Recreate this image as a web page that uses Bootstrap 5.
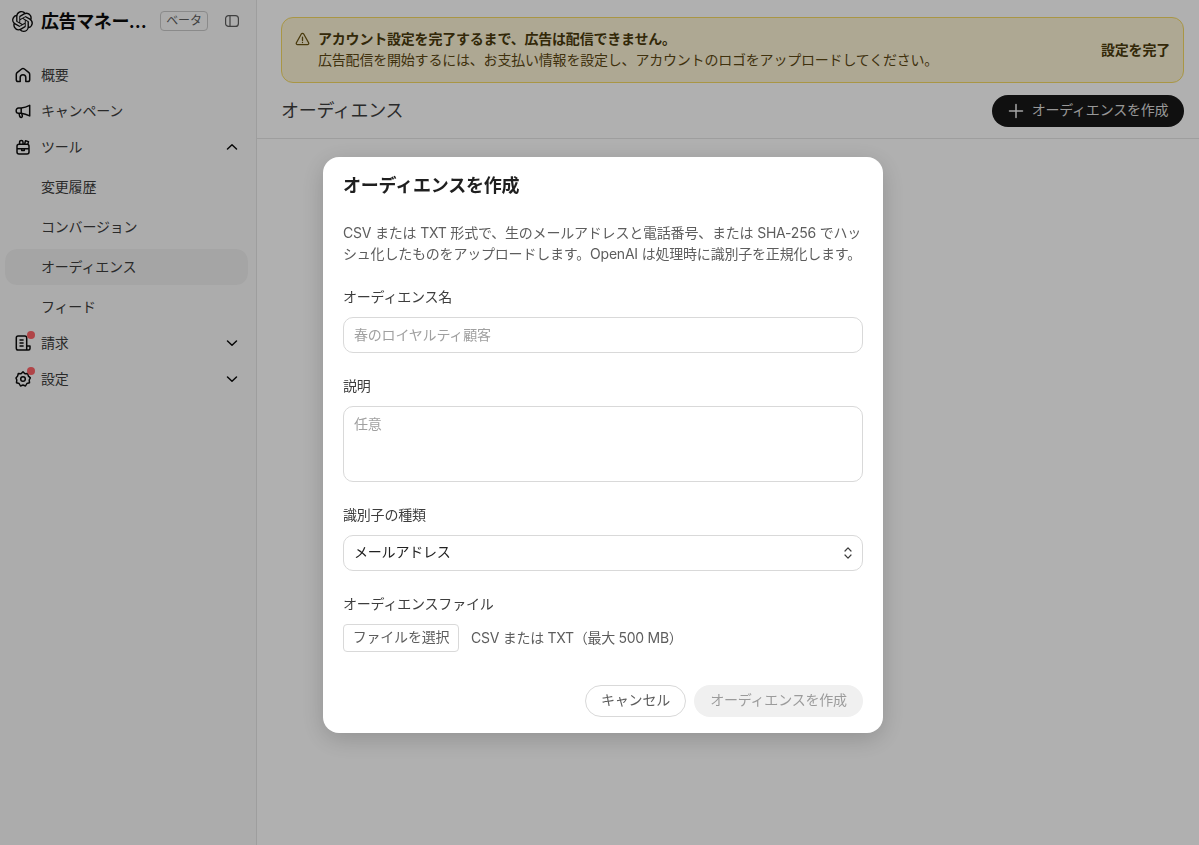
<!DOCTYPE html>
<html lang="ja">
<head>
<meta charset="utf-8">
<title>オーディエンス</title>
<link href="https://cdn.jsdelivr.net/npm/bootstrap@5.3.0/dist/css/bootstrap.min.css" rel="stylesheet">
<style>
html,body{height:100%}
body{font-family:Inter,"Noto Sans CJK JP",sans-serif;font-size:14px;letter-spacing:-.2px;color:#0d0d0d;background:#fff;overflow:hidden}
.shell{height:845px}
.side{width:257px;flex:none;background:#fafafa;border-right:1px solid #e5e5e5;padding:0 8px 0 5px}
.brandrow{height:42px;padding-left:7px}
.brandname{font-size:18px;font-weight:700;width:107px;margin-left:8px;white-space:nowrap;overflow:hidden;text-overflow:ellipsis;letter-spacing:-.4px}
.betatag{font-size:12px;line-height:18px;height:20px;width:48px;flex:none;border:1px solid #c8c8c8;border-radius:4px;color:#5d5d5d;text-align:center;margin-left:12px}
.togglei{margin-left:17px;flex:none}
.navwrap{margin-top:15px}
.sideitem{height:36px;padding-left:10px;padding-right:10px;color:#3d3d3d;border-radius:12px;gap:10px}
.sideitem>span:not(.icw),.subitem>span{padding-bottom:2px}
.subgroup{padding-top:2px;margin-bottom:-2px}
.subitem{height:40px;padding-left:36px;color:#3d3d3d}
.subactive{background:#f0f0f0;height:36px;border-radius:12px;margin:2px 0}
.icw{position:relative;width:16px;height:16px;flex:none;display:block}
.icw svg{display:block}
.reddot{position:absolute;width:8px;height:8px;border-radius:50%;background:#ff6469;top:-4px;right:-4px}
.mainpane{min-width:0}
.warnbox{margin:17px 15px 0 24px;height:66px;background:#fcf4d6;border:1px solid #f5da65;border-radius:12px;padding:0 13px 2px;color:#5c4813;line-height:21px}
.warnbox b{font-weight:700;color:#4a3a0c}
.warnico{flex:none;align-self:flex-start;margin:14px 8px 0 0}
.warnlink{font-weight:700;color:#4a3a0c}
.pagehead{height:55px;margin:0 15px 0 24px}
.pagehead h1{font-size:18px;font-weight:400;margin:0;color:#3d3d3d;letter-spacing:-.3px}
.btndark{background:#181818;color:#dcdcdc;border:0;border-radius:16px;height:32px;width:192px;font-size:14px;padding:0;gap:8px;letter-spacing:-.2px}
.btndark span{padding-bottom:2px}
.headrule{border-top:1px solid #e5e5e5}
.dimmer{position:fixed;inset:0;background:rgba(0,0,0,.31);z-index:10}
.dialogbox{position:fixed;left:323px;top:157px;width:560px;height:576px;background:#fff;border-radius:16px;z-index:11;padding:0 20px;box-shadow:0 6px 24px rgba(0,0,0,.18)}
.dialogbox h2{font-size:18px;font-weight:700;margin:0;padding-top:15px;line-height:27px;color:#1f1f1f;letter-spacing:-.2px}
.intro{color:#5d5d5d;line-height:21px;margin:23px 0 0}
.lbl{display:block;margin:0 0 10px;line-height:20px;color:#3d3d3d}
.fieldgap{margin-top:23px}
.dialogbox .form-control,.dialogbox .form-select{font-size:14px;border-color:#d9d9d9;border-radius:10px;padding:0 10px 2px;height:36px;color:#0d0d0d;box-shadow:none;letter-spacing:-.2px}
.dialogbox .form-select{padding-bottom:4px;color:#222}
.dialogbox .form-control::placeholder{color:#a0a0a0}
.dialogbox textarea.form-control{height:76px;padding-top:7px;resize:none;line-height:20px}
.dialogbox .form-select{background-image:none}
.selectwrap{position:relative}
.selectwrap svg{position:absolute;right:11px;top:11px}
.filebtn{height:28px;width:116px;border:1px solid #d9d9d9;border-radius:4px;background:#fff;color:#5d5d5d;font-size:14px;padding:0 0 3px;letter-spacing:-.2px}
.filenote{color:#5d5d5d;margin-left:12px;padding-bottom:2px;letter-spacing:-.28px}
.footrow{margin-top:33px;gap:8px}
.btncancel{height:32px;width:101px;border:1px solid #d9d9d9;border-radius:16px;background:#fff;color:#5d5d5d;font-size:14px;padding:0 0 3px;letter-spacing:-.2px}
.btnoff{height:32px;width:169px;border:0;border-radius:16px;background:#f0f0f0;color:#9b9b9b;font-size:14px;padding:0 0 3px;letter-spacing:-.2px}
</style>
</head>
<body>
<div class="d-flex shell">
  <aside class="side">
    <div class="d-flex align-items-center brandrow">
      <svg class="flex-shrink-0" width="21" height="21" viewBox="0 0 24 24" fill="#0d0d0d"><path d="M22.2819 9.8211a5.9847 5.9847 0 0 0-.5157-4.9108 6.0462 6.0462 0 0 0-6.5098-2.9A6.0651 6.0651 0 0 0 4.9807 4.1818a5.9847 5.9847 0 0 0-3.9977 2.9 6.0462 6.0462 0 0 0 .7427 7.0966 5.98 5.98 0 0 0 .511 4.9107 6.051 6.051 0 0 0 6.5146 2.9001A5.9847 5.9847 0 0 0 13.2599 24a6.0557 6.0557 0 0 0 5.7718-4.2058 5.9894 5.9894 0 0 0 3.9977-2.9001 6.0557 6.0557 0 0 0-.7475-7.0729zm-9.022 12.6081a4.4755 4.4755 0 0 1-2.8764-1.0408l.1419-.0804 4.7783-2.7582a.7948.7948 0 0 0 .3927-.6813v-6.7369l2.02 1.1686a.071.071 0 0 1 .038.052v5.5826a4.504 4.504 0 0 1-4.4945 4.4944zm-9.6607-4.1254a4.4708 4.4708 0 0 1-.5346-3.0137l.142.0852 4.783 2.7582a.7712.7712 0 0 0 .7806 0l5.8428-3.3685v2.3324a.0804.0804 0 0 1-.0332.0615L9.74 19.9502a4.4992 4.4992 0 0 1-6.1408-1.6464zM2.3408 7.8956a4.485 4.485 0 0 1 2.3655-1.9728V11.6a.7664.7664 0 0 0 .3879.6765l5.8144 3.3543-2.0201 1.1685a.0757.0757 0 0 1-.071 0l-4.8303-2.7865A4.504 4.504 0 0 1 2.3408 7.872zm16.5963 3.8558L13.1038 8.364 15.1192 7.2a.0757.0757 0 0 1 .071 0l4.8303 2.7913a4.4944 4.4944 0 0 1-.6765 8.1042v-5.6772a.79.79 0 0 0-.407-.667zm2.0107-3.0231l-.142-.0852-4.7735-2.7818a.7759.7759 0 0 0-.7854 0L9.409 9.2297V6.8974a.0662.0662 0 0 1 .0284-.0615l4.8303-2.7866a4.4992 4.4992 0 0 1 6.6802 4.66zM8.3065 12.863l-2.02-1.1638a.0804.0804 0 0 1-.038-.0567V6.0742a4.4992 4.4992 0 0 1 7.3757-3.4537l-.142.0805L8.704 5.459a.7948.7948 0 0 0-.3927.6813zm1.0976-2.3654l2.602-1.4998 2.6069 1.4998v2.9994l-2.5974 1.4997-2.6067-1.4997Z"/></svg>
      <div class="brandname">広告マネージャー</div>
      <div class="betatag">ベータ</div>
      <svg class="togglei" width="14" height="12" viewBox="0 0 14 12" fill="none" stroke="#5d5d5d" stroke-width="1.2"><rect x=".6" y=".6" width="12.8" height="10.8" rx="3"/><path d="M5 .8v10.400"/></svg>
    </div>
    <nav class="navwrap">
      <div class="d-flex align-items-center sideitem"><span class="icw"><svg width="16" height="16" viewBox="0 0 16 16" fill="none" stroke="#0d0d0d" stroke-width="1.5" stroke-linejoin="round"><path d="M1.300 7.400C1.300 6.700 1.600 6.100 2.100 5.700L6.600 2a2.200 2.200 0 0 1 2.800 0l4.500 3.700c.5.4.8 1 .8 1.700v5.400c0 1-.8 1.800-1.800 1.800h-2.100V10.500a2.800 2.800 0 0 0-5.600 0v4.100H3.100c-1 0-1.800-.8-1.800-1.800z"/></svg></span><span>概要</span></div>
      <div class="d-flex align-items-center sideitem"><span class="icw"><svg width="16" height="16" viewBox="0 0 16 16" fill="none" stroke="#0d0d0d" stroke-width="1.5" stroke-linejoin="round"><path d="M14.700 2.300v10.600c-3-1.500-5.500-2.300-8.500-2.700H3.500a2.300 2.300 0 0 1-2.300-2.300V7.300A2.300 2.300 0 0 1 3.500 5h2.700c3-.4 5.500-1.200 8.500-2.700z"/><path d="M6.200 5v5.200M4 10.200l.7 3.100c.2.800.8 1.200 1.600 1.100.8-.1 1.200-.8 1-1.600l-.5-2.300"/></svg></span><span>キャンペーン</span></div>
      <div class="d-flex align-items-center sideitem"><span class="icw"><svg width="16" height="16" viewBox="0 0 16 16" fill="none" stroke="#0d0d0d" stroke-width="1.5" stroke-linejoin="round"><path d="M4 5.200h8c1.100 0 2 .9 2 2v5.800c0 1.100-.9 2-2 2H4c-1.100 0-2-.9-2-2V7.200c0-1.100.9-2 2-2z"/><path d="M2 9.700h12M4.600 5.200V3.100a1.700 1.700 0 0 1 3.400 0v2.100M9.600 5.200 10.500 1.800l3 .8-.7 2.600"/><path d="M6.700 9.700v1.800h2.600V9.700"/></svg></span><span class="flex-grow-1">ツール</span><svg width="12" height="8" viewBox="0 0 12 8" fill="none" stroke="#0d0d0d" stroke-width="1.500" stroke-linecap="round" stroke-linejoin="round"><path d="M1.500 6 6 1.800 10.500 6"/></svg></div>
      <div class="subgroup">
        <div class="subitem d-flex align-items-center"><span>変更履歴</span></div>
        <div class="subitem d-flex align-items-center"><span>コンバージョン</span></div>
        <div class="subitem d-flex align-items-center subactive"><span>オーディエンス</span></div>
        <div class="subitem d-flex align-items-center"><span>フィード</span></div>
      </div>
      <div class="d-flex align-items-center sideitem"><span class="icw"><svg width="16" height="16" viewBox="0 0 16 16" fill="none" stroke="#0d0d0d" stroke-width="1.5" stroke-linejoin="round"><path d="M11.700 11V2.800c0-1-.8-1.800-1.800-1.800H3.100c-1 0-1.800.8-1.800 1.800v10.400c0 1 .8 1.800 1.800 1.800h10.400c.8 0 1.500-.7 1.500-1.500V11z"/><path d="M4.500 5h4.100M4.500 8h4.100M4.500 11h4.100M11.700 15v-4"/></svg><span class="reddot"></span></span><span class="flex-grow-1">請求</span><svg width="12" height="8" viewBox="0 0 12 8" fill="none" stroke="#0d0d0d" stroke-width="1.500" stroke-linecap="round" stroke-linejoin="round"><path d="M1.500 2 6 6.200 10.500 2"/></svg></div>
      <div class="d-flex align-items-center sideitem"><span class="icw"><svg width="16" height="16" viewBox="0 0 16 16" fill="none" stroke="#0d0d0d" stroke-width="1.5" stroke-linejoin="round"><path d="M8 .9l2 1.800 2.700-.2.700 2.600 2 1.800-1.200 2.100.3 2.700-2.600.8L10.500 15 8 14l-2.500 1-1.400-2.500-2.600-.8.300-2.700L1 6.900l1.600-1.800.7-2.600 2.700.2z"/><circle cx="8" cy="8" r="2.300"/></svg><span class="reddot"></span></span><span class="flex-grow-1">設定</span><svg width="12" height="8" viewBox="0 0 12 8" fill="none" stroke="#0d0d0d" stroke-width="1.500" stroke-linecap="round" stroke-linejoin="round"><path d="M1.500 2 6 6.200 10.500 2"/></svg></div>
    </nav>
  </aside>
  <main class="flex-grow-1 mainpane">
    <div class="warnbox d-flex align-items-center">
      <svg class="warnico" width="15" height="14" viewBox="0 0 15 14" fill="none" stroke="#6b5412" stroke-width="1.300" stroke-linejoin="round"><path d="M6.300 2 1.400 10.700c-.5.900.1 2 1.200 2h9.800c1.100 0 1.700-1.100 1.200-2L8.700 2c-.5-.9-1.900-.9-2.400 0z"/><path d="M7.500 5.200v3.300M7.500 10.300v.3" stroke-linecap="round"/></svg>
      <div class="flex-grow-1">
        <div><b>アカウント設定を完了するまで、広告は配信できません。</b></div>
        <div>広告配信を開始するには、お支払い情報を設定し、アカウントのロゴをアップロードしてください。</div>
      </div>
      <span class="warnlink">設定を完了</span>
    </div>
    <div class="pagehead d-flex align-items-center justify-content-between">
      <h1>オーディエンス</h1>
      <button class="btn btndark d-flex align-items-center justify-content-center" type="button"><svg width="16" height="16" viewBox="0 0 16 16" fill="none" stroke="#f0f0f0" stroke-width="1.500" stroke-linecap="round"><path d="M8 1.500v13M1.500 8h13"/></svg><span>オーディエンスを作成</span></button>
    </div>
    <div class="headrule"></div>
  </main>
</div>
<div class="dimmer"></div>
<div class="dialogbox" role="dialog">
  <h2>オーディエンスを作成</h2>
  <p class="intro">CSV または TXT 形式で、生のメールアドレスと電話番号、または SHA-256 でハッシュ化したものをアップロードします。OpenAI は処理時に識別子を正規化します。</p>
  <div class="fieldgap">
    <label class="lbl">オーディエンス名</label>
    <input class="form-control" type="text" placeholder="春のロイヤルティ顧客">
  </div>
  <div class="fieldgap">
    <label class="lbl">説明</label>
    <textarea class="form-control" placeholder="任意"></textarea>
  </div>
  <div class="fieldgap">
    <label class="lbl">識別子の種類</label>
    <div class="selectwrap">
      <select class="form-select"><option>メールアドレス</option></select>
      <svg width="8" height="14" viewBox="0 0 8 14" fill="none" stroke="#3d3d3d" stroke-width="1.200" stroke-linecap="round" stroke-linejoin="round"><path d="M1 5 4 1.800 7 5M1 9 4 12.200 7 9"/></svg>
    </div>
  </div>
  <div class="fieldgap">
    <label class="lbl">オーディエンスファイル</label>
    <div class="d-flex align-items-center">
      <button class="filebtn" type="button">ファイルを選択</button>
      <span class="filenote">CSV または TXT（最大 500 MB）</span>
    </div>
  </div>
  <div class="d-flex justify-content-end footrow">
    <button class="btncancel" type="button">キャンセル</button>
    <button class="btnoff" type="button" disabled>オーディエンスを作成</button>
  </div>
</div>
</body>
</html>
